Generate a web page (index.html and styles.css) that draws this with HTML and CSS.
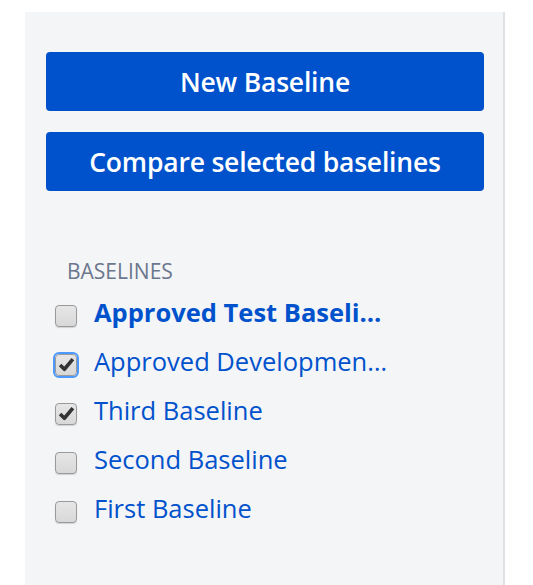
FILE: index.html
```html
<!DOCTYPE html>
<html>
<head>
<meta charset="utf-8">
<link rel="stylesheet" href="styles.css">
</head>
<body>
<aside class="panel">
  <div class="actions">
    <button class="btn">New Baseline</button>
    <button class="btn">Compare selected baselines</button>
  </div>
  <h3 class="section-title">BASELINES</h3>
  <ul class="list">
    <li class="item"><span class="cb"></span><a class="name bold">Approved Test Baseline One</a></li>
    <li class="item"><span class="cb checked focus"><svg viewBox="0 0 16 16" width="17" height="17"><path d="M2 8.5 L6 12.5 L14 3" fill="none" stroke="#333" stroke-width="3.4" stroke-linejoin="round"/></svg></span><a class="name">Approved Development Baseline</a></li>
    <li class="item"><span class="cb checked"><svg viewBox="0 0 16 16" width="17" height="17"><path d="M2 8.5 L6 12.5 L14 3" fill="none" stroke="#333" stroke-width="3.4" stroke-linejoin="round"/></svg></span><a class="name">Third Baseline</a></li>
    <li class="item"><span class="cb"></span><a class="name">Second Baseline</a></li>
    <li class="item"><span class="cb"></span><a class="name">First Baseline</a></li>
  </ul>
</aside>
</body>
</html>
```

FILE: styles.css
```css
html, body {
  margin: 0;
  padding: 0;
  background: #ffffff;
  height: 100%;
}
body {
  font-family: "Open Sans", "Noto Sans", sans-serif;
  padding-top: 12px;
  padding-left: 25px;
  box-sizing: border-box;
}
.panel {
  width: 480px;
  min-height: 573px;
  background: #f4f5f7;
  border-right: 2px solid #dfe1e6;
  box-sizing: border-box;
  padding: 40px 19px 0 21px;
}
.actions {
  display: flex;
  flex-direction: column;
  gap: 21px;
}
.btn {
  height: 59px;
  width: 100%;
  border: none;
  border-radius: 4px;
  background: #0052cc;
  color: #ffffff;
  font-family: "Open Sans", "Noto Sans", sans-serif;
  font-weight: 600;
  font-size: 26.5px;
  letter-spacing: -0.2px;
}
.section-title {
  margin: 68px 0 0 21px;
  font-size: 21px;
  font-weight: 400;
  color: #6b778c;
  line-height: 24px;
}
.list {
  list-style: none;
  margin: 4px 0 0 0;
  padding: 0 0 0 9px;
}
.item {
  display: flex;
  align-items: center;
  height: 49px;
  gap: 17px;
}
.cb {
  flex: none;
  width: 22px;
  height: 22px;
  box-sizing: border-box;
  border: 1px solid #9a9a9a;
  border-radius: 4px;
  background: linear-gradient(#e6e6e6, #d8d8d8);
  box-shadow: 0 1px 1px rgba(0,0,0,0.15);
  margin-top: 8px;
  display: flex;
  align-items: center;
  justify-content: center;
}
.cb svg {
  display: block;
}
.cb.focus {
  outline: 2px solid #4c9aff;
  outline-offset: 0;
}
.name {
  color: #0052cc;
  font-size: 25.5px;
  white-space: nowrap;
  overflow: hidden;
  text-overflow: ellipsis;
  max-width: 295px;
  line-height: 34px;
}
.name.bold {
  font-weight: 700;
}
```
